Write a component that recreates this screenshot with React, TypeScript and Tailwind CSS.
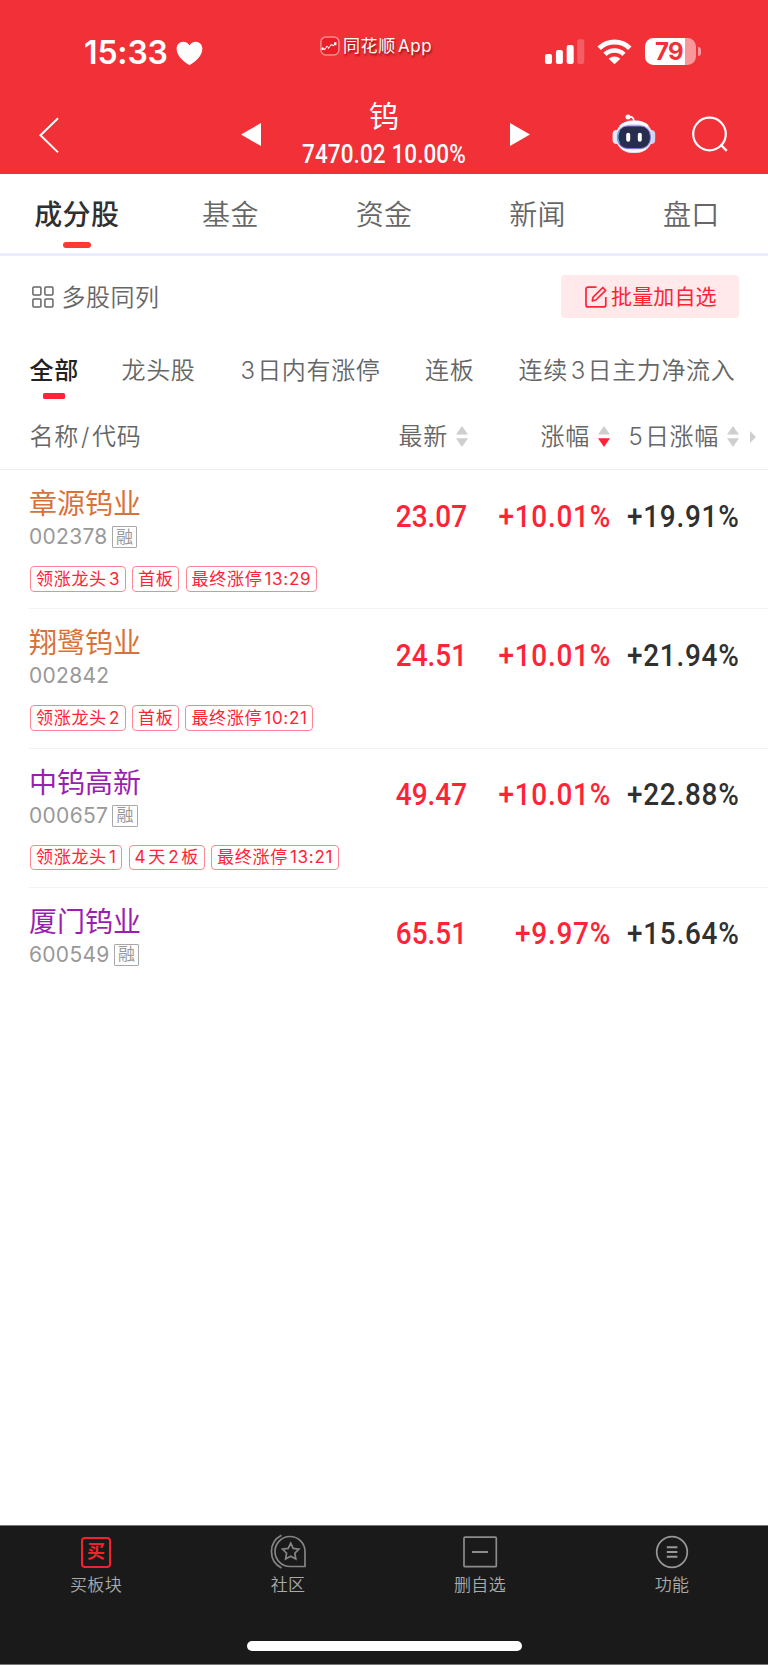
import React from "react";

type Stock = {
  name: string;
  code: string;
  margin: boolean;
  tone: string;
  price: string;
  change: string;
  fiveDay: string;
  tags: string[];
};

const stocks: Stock[] = [
  { name: "章源钨业", code: "002378", margin: true, tone: "text-[#d9713a]", price: "23.07", change: "+10.01%", fiveDay: "+19.91%", tags: ["领涨龙头3", "首板", "最终涨停13:29"] },
  { name: "翔鹭钨业", code: "002842", margin: false, tone: "text-[#d9713a]", price: "24.51", change: "+10.01%", fiveDay: "+21.94%", tags: ["领涨龙头2", "首板", "最终涨停10:21"] },
  { name: "中钨高新", code: "000657", margin: true, tone: "text-[#9a1fb0]", price: "49.47", change: "+10.01%", fiveDay: "+22.88%", tags: ["领涨龙头1", "4天2板", "最终涨停13:21"] },
  { name: "厦门钨业", code: "600549", margin: true, tone: "text-[#9a1fb0]", price: "65.51", change: "+9.97%", fiveDay: "+15.64%", tags: [] },
];

const tabs = ["成分股", "基金", "资金", "新闻", "盘口"];

function Sort({ active = false }: { active?: boolean }) {
  return (
    <svg width="12" height="21" viewBox="0 0 12 21" className="shrink-0">
      <path d="M6 0L12 8.6H0Z" fill="#cecece" />
      <path d="M0 12.2H12L6 21Z" fill={active ? "#ff2337" : "#cecece"} />
    </svg>
  );
}

function StatusBar() {
  return (
    <div className="flex h-[90px] items-start text-white">
      <div className="ml-[84px] mt-[33px] flex w-[236px] items-center">
        <span className="w-[84px] whitespace-nowrap text-[32px] font-semibold leading-[40px] tracking-[-0.15px]">15:33</span>
        <svg width="27" height="25" viewBox="0 0 27 25" className="ml-[7.5px] shrink-0">
          <path d="M13.5 24.2C12 23.2 .6 17 .6 7.8C.6 3.6 3.6.7 7.2.7C10 .7 12.3 2.2 13.5 4.6C14.7 2.2 17 .7 19.8.7C23.4.7 26.4 3.6 26.4 7.8C26.4 17 15 23.2 13.5 24.2Z" fill="#fff" />
        </svg>
      </div>
      <div className="mt-[33px] flex w-[225px] items-center">
        <svg width="20" height="20" viewBox="0 0 20 20" className="shrink-0">
          <rect x=".9" y=".9" width="18" height="18" rx="5" fill="#e62026" stroke="#f88b8d" strokeWidth="1.5" />
          <path d="M1.5 12.5L4.5 13.5L7 10.5L8.5 12L11.5 8.5L13.5 9.5L16 6.5" fill="none" stroke="#fff" strokeWidth="1.3" strokeDasharray="2.2 .7" />
          <path d="M14.2 6.2h2.2v3h-2.2zM2 11.5h1.6v2.4H2z" fill="#fff" />
        </svg>
        <span className="ml-[3px] mt-[1px] whitespace-nowrap text-[17px] leading-6 tracking-[0.6px] [text-autospace:normal] [text-shadow:1px_1.5px_2px_rgba(90,0,0,0.65)]">同花顺App</span>
      </div>
      <svg width="40" height="26" viewBox="0 0 40 26" className="mt-[38px]">
        <rect x="0" y="16" width="7" height="10" rx="2" fill="#fff" />
        <rect x="10.9" y="12" width="7" height="14" rx="2" fill="#fff" />
        <rect x="21.7" y="7" width="7" height="19" rx="2" fill="#fff" />
        <rect x="32.3" y="1.3" width="7" height="24.7" rx="2" fill="#fff" opacity=".22" />
      </svg>
      <svg width="35" height="26" viewBox="0 0 35 26" className="ml-[12px] mt-[38.5px]">
        <path d="M2.2 9.2A22 22 0 0 1 32.8 9.2" fill="none" stroke="#fff" strokeWidth="5" />
        <path d="M8 15.3A13.6 13.6 0 0 1 27 15.3" fill="none" stroke="#fff" strokeWidth="4.6" />
        <path d="M17.5 25.2L11.7 19.7A8.5 8.5 0 0 1 23.3 19.7Z" fill="#fff" />
      </svg>
      <div className="ml-[13px] mt-[38px] flex items-center">
        <div className="flex h-[27px] w-[51px] items-center rounded-[8.5px] bg-[linear-gradient(90deg,#fff_40px,rgba(255,255,255,0.5)_40px)] pl-[10px]">
          <span className="whitespace-nowrap text-[24px] font-bold leading-[27px] tracking-[-0.8px] text-[#f13037]">79</span>
        </div>
        <div className="ml-[2px] h-[9px] w-[3px] rounded-r-full bg-white/50" />
      </div>
    </div>
  );
}

function Robot() {
  return (
    <svg width="44" height="40" viewBox="0 0 44 40">
      <path d="M15 3.4C19 1.8 21.8 3 22 7.5" fill="none" stroke="#eef0fb" strokeWidth="1.8" />
      <circle cx="16" cy="3" r="2.5" fill="#fff" />
      <rect x=".6" y="16" width="8" height="14" rx="4" fill="#e6e8f8" />
      <rect x="35.2" y="16" width="8" height="14" rx="4" fill="#cfd2f2" />
      <rect x="3.6" y="6.5" width="37" height="32.5" rx="16.2" fill="#dfe1f3" />
      <path d="M8.5 12.5C13 7.5 30 6.5 35.5 12.5" stroke="#fff" strokeWidth="3" fill="none" />
      <path d="M10 34.5C16 38 28 38 34 34.5" stroke="#fff" strokeWidth="1.5" fill="none" />
      <rect x="5.6" y="12" width="32.8" height="22.5" rx="10" fill="#272d4c" stroke="#8674e0" strokeWidth="1" />
      <path d="M7.6 29C5.4 25.5 5.4 20.5 7.6 17" stroke="#58c6f0" strokeWidth="1" fill="none" />
      <rect x="14.2" y="18.8" width="4" height="9" rx="2" fill="#fff" />
      <rect x="25.8" y="18.8" width="4" height="9" rx="2" fill="#fff" />
    </svg>
  );
}

function NavBar() {
  return (
    <div className="flex h-[84px] items-start text-white">
      <svg width="20" height="37" viewBox="0 0 20 37" className="ml-[39px] mt-[26.5px]">
        <path d="M19 1.2L1.5 18.3L19 35.4" fill="none" stroke="#fff" strokeWidth="2" />
      </svg>
      <svg width="20" height="23" viewBox="0 0 20 23" className="ml-[182px] mt-[32.5px]">
        <path d="M20 0V23L0 11.5Z" fill="#fff" />
      </svg>
      <div className="flex w-[246px] flex-col items-center">
        <span className="mt-[6px] text-[30px] leading-[40px]">钨</span>
        <span className="mt-[4px] scale-x-[0.9] whitespace-nowrap font-['Roboto'] text-[25px] font-medium leading-[30px] tracking-[0.1px]">7470.02 10.00%</span>
      </div>
      <svg width="20" height="23" viewBox="0 0 20 23" className="ml-[3px] mt-[32.5px]">
        <path d="M0 0V23L20 11.5Z" fill="#fff" />
      </svg>
      <div className="ml-[82px] mt-[23.5px]"><Robot /></div>
      <svg width="38" height="38" viewBox="0 0 38 38" className="ml-[35px] mt-[25px]">
        <circle cx="18.5" cy="19" r="16.3" fill="none" stroke="#fff" strokeWidth="2.2" />
        <path d="M29.5 29.5L35.8 35.8" stroke="#fff" strokeWidth="2.4" />
      </svg>
    </div>
  );
}

function Tabs() {
  return (
    <nav className="grid h-[82px] grid-cols-5 border-b-[3px] border-[#ececff]">
      {tabs.map((t, i) => (
        <div key={t} className="flex flex-col items-center pt-[21px]">
          <span className={i === 0 ? "text-[28px] font-medium leading-[40px] tracking-[0.4px] text-[#303030]" : "text-[28px] font-[350] leading-[40px] tracking-[0.3px] text-[#666]"}>{t}</span>
          {i === 0 && <i className="mt-[7px] h-[6px] w-[28px] rounded-[3px] bg-[#ff3b30]" />}
        </div>
      ))}
    </nav>
  );
}

function Toolbar() {
  return (
    <div className="flex h-[62px] items-end justify-between pl-[32px] pr-[29px]">
      <div className="flex h-[43px] items-center text-[#666]">
        <svg width="22" height="22" viewBox="0 0 22 22" fill="none" stroke="#666" strokeWidth="1.5">
          <rect x=".9" y=".9" width="8" height="8" rx="1" />
          <rect x="12.9" y=".9" width="8" height="8" rx="1" />
          <rect x=".9" y="12.9" width="8" height="8" rx="1" />
          <rect x="12.9" y="12.9" width="8" height="8" rx="1" />
        </svg>
        <span className="ml-[7.5px] mt-[2px] text-[24px] font-[350] leading-[36px] tracking-[0.5px]">多股同列</span>
      </div>
      <button className="flex h-[43px] w-[178px] items-center rounded-[4px] bg-[#ffe9eb] pl-[24px] text-[#ff2337]">
        <svg width="22" height="22" viewBox="0 0 22 22" fill="none" stroke="#ff2337" strokeWidth="1.7">
          <path d="M11.5 1.1H3A2 2 0 0 0 1 3.1V18.9A2 2 0 0 0 3 20.9H18.8A2 2 0 0 0 20.8 18.9V11" />
          <path d="M7.3 14.8L8.1 11.2L17.8 1.5L20.6 4.3L10.9 14Z" strokeLinejoin="round" />
        </svg>
        <span className="ml-[4px] mt-[1px] whitespace-nowrap text-[21px] leading-[32px] tracking-[0.15px]">批量加自选</span>
      </button>
    </div>
  );
}

const filterCell = "shrink-0 whitespace-nowrap";

function Filters() {
  return (
    <div className="flex h-[94px] items-start pl-[29.5px] pt-[35px] text-[24px] font-[350] leading-[36px] tracking-[0.65px] text-[#666]">
      <div className="flex w-[92px] shrink-0 flex-col">
        <span className="font-medium text-[#222]">全部</span>
        <i className="ml-[13.5px] mt-[4px] h-[5.5px] w-[21.5px] rounded-[1.5px] bg-[#ff2337]" />
      </div>
      <span className={`${filterCell} w-[119px]`}>龙头股</span>
      <span className={`${filterCell} w-[184.5px]`}><span className="mr-[1.5px]">3</span>日内有涨停</span>
      <span className={`${filterCell} w-[93.5px]`}>连板</span>
      <span className={filterCell}>连续<span className="ml-[3px] mr-[1.5px]">3</span>日主力净流入</span>
    </div>
  );
}

function Columns() {
  return (
    <div className="flex h-[58px] items-start border-b border-[#ececec] pl-[29.5px] pt-[6.5px] text-[24px] font-[350] leading-[36px] tracking-[0.7px] text-[#666]">
      <span className="w-[240px]">名称<span className="mx-[2px]">/</span>代码</span>
      <div className="flex h-[36px] w-[198px] items-center justify-end gap-[7.5px]">最新<Sort /></div>
      <div className="flex h-[36px] w-[142.5px] items-center justify-end gap-[8px]">涨幅<Sort active /></div>
      <div className="flex h-[36px] w-[129px] items-center justify-end gap-[8px]"><span><span className="mr-[1.5px]">5</span>日涨幅</span><Sort /></div>
      <svg width="6" height="12" viewBox="0 0 6 12" className="ml-[11px] mt-[12px]"><path d="M0 0L6 6L0 12Z" fill="#cecece" /></svg>
    </div>
  );
}

const figure = "mt-[26.5px] h-[40px] origin-right scale-x-[0.9] whitespace-nowrap text-right font-['Roboto'] text-[31px] font-medium leading-[40px]";

function Row({ s, last }: { s: Stock; last: boolean }) {
  return (
    <div className={last ? "ml-[29px] h-[139.25px]" : "ml-[29px] h-[139.25px] border-b-[1.5px] border-[#f3f3f3]"}>
      <div className="flex h-[96px]">
        <div className="w-[237.5px] pt-[14px]">
          <div className={`text-[28px] leading-[40px] ${s.tone}`}>{s.name}</div>
          <div className="flex h-[26px] items-center">
            <span className="text-[21px] font-normal leading-[26px] tracking-[0.3px] text-[#999]">{s.code}</span>
            {s.margin && (
              <span className="ml-[4px] flex h-[22px] w-[25.5px] items-center justify-center rounded-[1px] border-[1.5px] border-[#a8a8a8] text-[17px] leading-none text-[#999]">融</span>
            )}
          </div>
        </div>
        <div className={`${figure} w-[200px] text-[#ff2337]`}>{s.price}</div>
        <div className={`${figure} w-[144px] tracking-[0.85px] text-[#ff2337]`}>{s.change}</div>
        <div className={`${figure} w-[128.5px] tracking-[0.85px] text-[#303030]`}>{s.fiveDay}</div>
      </div>
      {s.tags.length > 0 && (
        <div className="ml-[1px] flex gap-[6.5px]">
          {s.tags.map((t) => (
            <span key={t} className="flex h-[25.5px] items-center whitespace-nowrap rounded-[4px] border border-[#ff8592] pl-[5px] pr-[4.5px] text-[17px] leading-[24px] tracking-[0.7px] text-[#ff2337] [text-autospace:normal]">{t}</span>
          ))}
        </div>
      )}
    </div>
  );
}

function BottomBar() {
  const cell = "flex flex-col items-center";
  const label = "mt-[1px] text-[17px] font-[350] leading-[26px] tracking-[0.3px] text-[#aaa]";
  return (
    <footer className="flex h-[140px] flex-col items-center border-b border-t border-b-[#777] border-t-[#777] bg-[#1a1a1a]">
      <div className="grid w-full grid-cols-4 pt-[7px]">
        <div className={cell}>
          <div className="flex h-[38px] items-center">
            <div className="flex h-[31px] w-[30px] items-center justify-center rounded-[4px] border-2 border-[#f5222d] text-[18px] font-bold leading-none text-[#f5222d]">买</div>
          </div>
          <span className={label}>买板块</span>
        </div>
        <div className={cell}>
          <svg width="38" height="38" viewBox="0 0 38 38" fill="none" stroke="#858585" strokeWidth="1.7">
            <path d="M36 33.5H21.5A15 15 0 1 1 36 18.5Z" strokeLinejoin="round" />
            <path d="M12.5 2.2A18.4 18.4 0 0 0 12.5 35" />
            <path d="M21.7 10.2L24.2 15.4L29.9 16.2L25.8 20.2L26.8 26L21.7 23.2L16.6 26L17.6 20.2L13.5 16.2L19.2 15.4Z" />
          </svg>
          <span className={label}>社区</span>
        </div>
        <div className={cell}>
          <svg width="38" height="38" viewBox="0 0 38 38" fill="none" stroke="#8c8c8c" strokeWidth="1.7">
            <rect x="3" y="4.2" width="32.3" height="29.5" rx="1" />
            <path d="M11 19H27" strokeWidth="2" />
          </svg>
          <span className={label}>删自选</span>
        </div>
        <div className={cell}>
          <svg width="38" height="38" viewBox="0 0 38 38" fill="none" stroke="#999" strokeWidth="1.7">
            <circle cx="19" cy="19" r="15.3" />
            <path d="M13.8 14.3H24.4M13.8 19H24.4M13.8 23.7H24.4" strokeWidth="1.9" />
          </svg>
          <span className={label}>功能</span>
        </div>
      </div>
      <div className="mt-[43px] h-[9.5px] w-[275px] rounded-full bg-white" />
    </footer>
  );
}

export default function App() {
  return (
    <div className="flex h-[1665px] w-[768px] flex-col overflow-hidden bg-white font-['Inter','Noto_Sans_CJK_SC',sans-serif]">
      <header className="h-[174px] shrink-0 bg-[#f13037]">
        <StatusBar />
        <NavBar />
      </header>
      <Tabs />
      <Toolbar />
      <Filters />
      <Columns />
      <main className="flex-1">
        {stocks.map((s, i) => (
          <Row key={s.code} s={s} last={i === stocks.length - 1} />
        ))}
      </main>
      <BottomBar />
    </div>
  );
}
